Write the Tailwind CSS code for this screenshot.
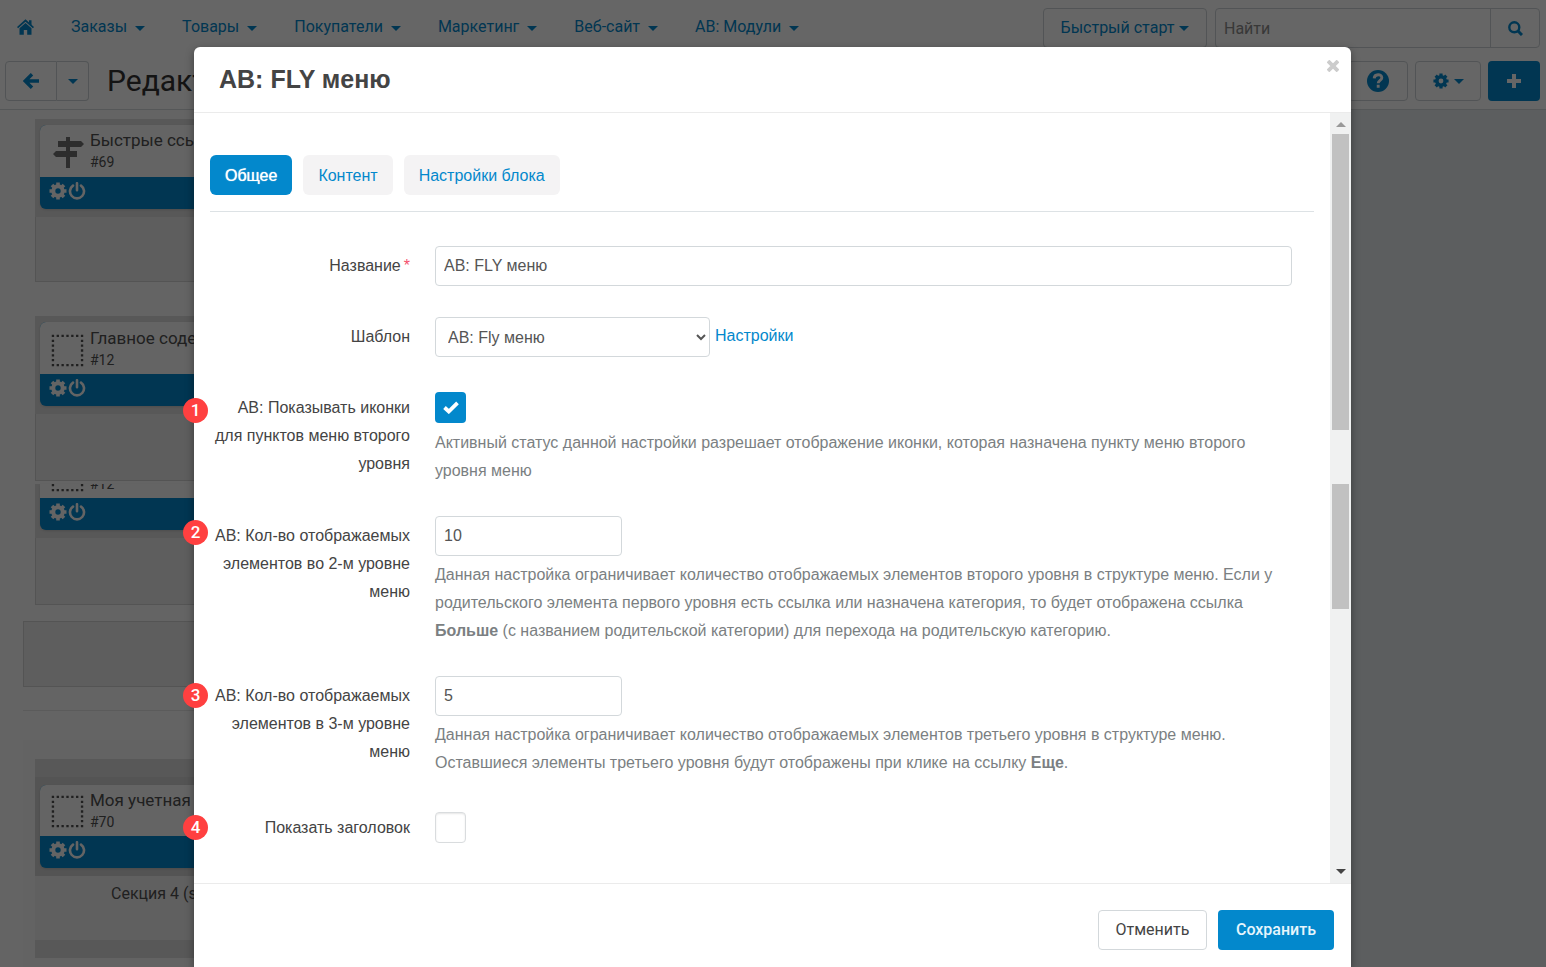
<!DOCTYPE html>
<html lang="ru">

<head>
    <meta charset="UTF-8">
    <meta name="viewport" content="width=device-width, initial-scale=1.0">
    <title>AB: FLY меню</title>
    <script src="https://cdn.jsdelivr.net/npm/@tailwindcss/browser@4"></script>
</head>

<body class="relative h-screen overflow-hidden bg-[#e6ebee] font-[Roboto,sans-serif] text-base text-[#333]">

    <!-- shared icons -->
    <svg class="hidden">
        <symbol id="gear" viewBox="0 0 18 18">
            <path d="M9 0.5v4M9 13.5v4M0.5 9h4M13.5 9h4M3 3l2.8 2.8M12.2 12.2L15 15M15 3l-2.8 2.8M5.8 12.2L3 15" fill="none" stroke="currentColor" stroke-width="3.6" />
            <circle cx="9" cy="9" r="4.7" fill="none" stroke="currentColor" stroke-width="4" />
        </symbol>
        <symbol id="power" viewBox="0 0 18 18">
            <path d="M5 3.6a7 7 0 1 0 8 0M9 1.2v7" fill="none" stroke="currentColor" stroke-width="2.6" stroke-linecap="round" />
        </symbol>
        <symbol id="caret" viewBox="0 0 10 5">
            <path d="M0 0h10L5 5z" fill="currentColor" />
        </symbol>
        <symbol id="block" viewBox="0 0 34 34">
            <rect x="2" y="2" width="30" height="30" fill="none" stroke="currentColor" stroke-width="2.4" stroke-dasharray="2.4 2.6" stroke-dashoffset="1.2" />
        </symbol>
    </svg>

    <!-- admin page -->
    <header class="flex h-14 items-start justify-between bg-white pr-[6px] text-[#0388cc]">
        <nav class="flex items-center gap-[37px] pt-[15px] pl-[17px] leading-6">
            <a href="#" aria-label="Главная">
                <svg class="h-4 w-[17px]" viewBox="0 0 17 16" fill="currentColor">
                    <path d="M8.500 0.300L17 8l-1.100 1.300L8.500 2.800 1.100 9.300 0 8z" />
                    <path d="M12 1.200h2.500v5L12 3.800zM8.500 4L14.500 9.200V15.700H10.200V11H6.800v4.700H2.500V9.200z" />
                </svg>
            </a>
            <a href="#" class="flex items-center gap-2">Заказы <svg class="mt-[3px] h-[5px] w-[10px]"><use href="#caret" /></svg></a>
            <a href="#" class="flex items-center gap-2">Товары <svg class="mt-[3px] h-[5px] w-[10px]"><use href="#caret" /></svg></a>
            <a href="#" class="flex items-center gap-2">Покупатели <svg class="mt-[3px] h-[5px] w-[10px]"><use href="#caret" /></svg></a>
            <a href="#" class="flex items-center gap-2">Маркетинг <svg class="mt-[3px] h-[5px] w-[10px]"><use href="#caret" /></svg></a>
            <a href="#" class="flex items-center gap-2">Веб-сайт <svg class="mt-[3px] h-[5px] w-[10px]"><use href="#caret" /></svg></a>
            <a href="#" class="flex items-center gap-2">АВ: Модули <svg class="mt-[3px] h-[5px] w-[10px]"><use href="#caret" /></svg></a>
        </nav>
        <div class="flex gap-2 pt-2">
            <button type="button" class="flex h-10 w-[164px] items-center justify-center gap-[5px] rounded border border-[#ccd2d6]">Быстрый старт <svg class="h-[5px] w-[10px]"><use href="#caret" /></svg></button>
            <form class="flex h-10 w-[325px] rounded border border-[#ccd2d6]">
                <input type="text" placeholder="Найти" aria-label="Найти" class="min-w-0 flex-1 px-2 pt-px placeholder:text-[#8c8c8c]">
                <button type="button" aria-label="Искать" class="flex w-[49px] items-center justify-center border-l border-[#ccd2d6]">
                    <svg class="size-[15px]" viewBox="0 0 15 15" fill="none" stroke="currentColor" stroke-width="2.400">
                        <circle cx="6.300" cy="6.300" r="5" />
                        <path d="M10 10l4 4" stroke-width="3" />
                    </svg>
                </button>
            </form>
        </div>
    </header>

    <div class="flex h-[54px] items-start justify-between border-b border-[#d5d9dc] bg-white pt-[5px] pr-[6px] pl-[5px] text-[#0388cc]">
        <div class="flex items-center">
            <button type="button" aria-label="Назад" class="flex h-10 w-[52px] items-center justify-center rounded-l border border-[#ccd2d6]">
                <svg class="size-4" viewBox="0 0 16 16" fill="none" stroke="currentColor" stroke-width="3.400">
                    <path d="M16 8H2.500M9 1.200L2.200 8l6.800 6.800" />
                </svg>
            </button>
            <button type="button" aria-label="История" class="flex h-10 w-8 items-center justify-center rounded-r border border-l-0 border-[#ccd2d6]"><svg class="h-[5px] w-[10px]"><use href="#caret" /></svg></button>
            <h1 class="ml-[18px] text-[30px] leading-10 text-[#333]">Редактирование макета</h1>
        </div>
        <div class="flex gap-[7px]">
            <button type="button" aria-label="Справка" class="flex h-10 w-[60px] items-center justify-center rounded border border-[#ccd2d6]">
                <svg class="size-[22px]" viewBox="0 0 23 23">
                    <circle cx="11.500" cy="11.500" r="11.500" fill="currentColor" />
                    <path d="M7.500 8.800c0.200-5 8-5 8-0.700c0 2.800-3.800 2.700-3.800 5.700M11.700 15.500v3" fill="none" stroke="#fff" stroke-width="3" />
                </svg>
            </button>
            <button type="button" aria-label="Действия" class="flex h-10 w-[66px] items-center justify-center gap-[5px] rounded border border-[#ccd2d6]"><svg class="size-4"><use href="#gear" /></svg><svg class="h-[5px] w-[10px]"><use href="#caret" /></svg></button>
            <button type="button" aria-label="Добавить" class="flex h-10 w-[52px] items-center justify-center rounded bg-[#0388cc] text-white">
                <svg class="size-[14px]" viewBox="0 0 14 14" stroke="currentColor" stroke-width="4"><path d="M7 0v14M0 7h14" /></svg>
            </button>
        </div>
    </div>

    <main class="flex h-[857px] w-1/2 flex-col bg-[#fafafa] pt-[9px] pl-[23px] text-[#505050]">
        <section class="ml-3 border-b border-[#d2d2d2] bg-[#ebebeb]">
            <div class="h-[98px] bg-[#dcdcdc] pt-[6px] pl-[5px]">
                <div class="rounded-l-md bg-[#0388cc] shadow">
                    <div class="flex h-[52px] gap-[6px] rounded-tl-md bg-[#fafafa] pl-[13px]">
                        <svg class="mt-3 h-8 w-[31px] text-[#707070]" viewBox="0 0 31 32" fill="currentColor">
                            <path d="M13 0h4v31h-4z" />
                            <path d="M5 4h23l3 3-3 3H5zM3 14h21v6H3l-3-3z" />
                        </svg>
                        <div class="pt-[3px] text-[17px] leading-6">Быстрые ссылки<div class="text-sm leading-5">#69</div></div>
                    </div>
                    <div class="flex h-8 items-start gap-px pt-[5px] pl-[9px] text-[#fafafa]"><svg class="size-[18px]"><use href="#gear" /></svg><svg class="size-[18px]"><use href="#power" /></svg></div>
                </div>
            </div>
            <div class="h-16 border-l border-[#d2d2d2]"></div>
        </section>

        <section class="mt-[34px] ml-3 border-b border-[#d2d2d2] bg-[#ebebeb]">
            <div class="h-[98px] bg-[#dcdcdc] pt-[6px] pl-[5px]">
                <div class="rounded-l-md bg-[#0388cc] shadow">
                    <div class="flex h-[52px] gap-[6px] rounded-tl-md bg-[#fafafa] pl-[11px]">
                        <svg class="mt-3 size-[33px]"><use href="#block" /></svg>
                        <div class="pt-1 text-[17px] leading-6">Главное содержимое<div class="text-sm leading-5">#12</div></div>
                    </div>
                    <div class="flex h-8 items-start gap-px pt-[5px] pl-[9px] text-[#fafafa]"><svg class="size-[18px]"><use href="#gear" /></svg><svg class="size-[18px]"><use href="#power" /></svg></div>
                </div>
            </div>
            <div class="h-[66px] border-l border-[#d2d2d2]"></div>
        </section>

        <!-- lower end of a block that is scrolled under the previous one -->
        <section class="mt-[3px] ml-3 border-b border-[#d2d2d2] bg-[#ebebeb]">
            <div class="h-[54px] bg-[#dcdcdc] pl-[5px]">
                <div class="rounded-bl-md bg-[#0388cc] shadow">
                    <div class="flex h-[14px] items-end gap-[6px] overflow-hidden bg-[#fafafa] pl-[11px]">
                        <svg class="mb-[6px] size-[33px] shrink-0"><use href="#block" /></svg>
                        <div class="mb-1 text-sm leading-5">#12</div>
                    </div>
                    <div class="flex h-8 items-start gap-px pt-[5px] pl-[9px] text-[#fafafa]"><svg class="size-[18px]"><use href="#gear" /></svg><svg class="size-[18px]"><use href="#power" /></svg></div>
                </div>
            </div>
            <div class="h-[66px] border-l border-[#d2d2d2]"></div>
        </section>

        <section class="mt-4 h-[66px] border border-[#d2d2d2] bg-[#ebebeb]"></section>
        <hr class="mt-[23px] border-[#e3e3e3]">

        <section class="mt-[29px] bg-[#f7f7f7] pt-[19px] pl-3">
            <div class="h-[18px] bg-[#dcdcdc]"></div>
            <div class="h-[99px] bg-[#d2d2d2] pt-2 pl-[5px]">
                <div class="rounded-l-md bg-[#0388cc] shadow">
                    <div class="flex h-[51px] gap-[6px] rounded-tl-md bg-[#fafafa] pl-[11px]">
                        <svg class="mt-[10px] size-[33px]"><use href="#block" /></svg>
                        <div class="pt-[3px] text-[17px] leading-6">Моя учетная запись<div class="text-sm leading-5">#70</div></div>
                    </div>
                    <div class="flex h-8 items-start gap-px pt-[5px] pl-[9px] text-[#fafafa]"><svg class="size-[18px]"><use href="#gear" /></svg><svg class="size-[18px]"><use href="#power" /></svg></div>
                </div>
            </div>
            <div class="h-16 bg-[#f0f0f0] pt-[6px] pl-[76px] leading-6">Секция 4 (span 4)</div>
            <div class="h-[18px] bg-[#dcdcdc]"></div>
            <div class="h-[9px]"></div>
        </section>
    </main>

    <!-- dialog -->
    <div class="absolute inset-0 bg-black/60 pt-[47px] pr-[195px] pl-[194px]">
        <div role="dialog" aria-labelledby="dialog-title" class="flex h-full flex-col rounded-t-md bg-white font-['Liberation_Sans',Arial,sans-serif] text-[#444] shadow-[0_3px_8px_rgba(0,0,0,0.4)]">
            <div class="flex h-[66px] shrink-0 items-start justify-between border-b border-[#ebebeb] pr-3 pl-[25px]">
                <h2 id="dialog-title" class="pt-4 text-[25px] leading-8 font-bold">AB: FLY меню</h2>
                <button type="button" aria-label="Закрыть" class="mt-[13px] text-[#ccc]">
                    <svg class="size-3" viewBox="0 0 12 12" stroke="currentColor" stroke-width="3.800"><path d="M1 1l10 10M11 1L1 11" /></svg>
                </button>
            </div>

            <div class="flex min-h-0 flex-1">
                <div class="min-w-0 flex-1 pt-[42px] pr-4 pl-4">
                    <div class="flex gap-[11px] border-b border-[#dde2e5] pb-4">
                        <button type="button" class="h-10 rounded-md bg-[#0388cc] px-[15px] pt-px text-white [text-shadow:0_0_1px_#fff]">Общее</button>
                        <button type="button" class="h-10 rounded-md bg-[#f4f3f4] px-[15px] pt-px text-[#0388cc]">Контент</button>
                        <button type="button" class="h-10 rounded-md bg-[#f4f3f4] px-[15px] pt-px text-[#0388cc]">Настройки блока</button>
                    </div>

                    <form class="mt-[34px] grid gap-[31px] pr-[22px] leading-7">
                        <div class="flex gap-[25px]">
                            <label for="name" class="w-[200px] shrink-0 pt-[6px] text-right">Название<span class="ml-[3px] text-[#f4516c]">*</span></label>
                            <input id="name" type="text" value="AB: FLY меню" class="h-10 min-w-0 flex-1 rounded border border-[#d3d8db] px-2 text-[#555]">
                        </div>

                        <div class="flex gap-[25px]">
                            <label for="template" class="w-[200px] shrink-0 pt-[6px] text-right">Шаблон</label>
                            <div class="flex gap-[5px]">
                                <select id="template" class="h-10 w-[275px] rounded border border-[#d3d8db] bg-white px-2 text-[#555]">
                                    <option>AB: Fly меню</option>
                                </select>
                                <a href="#" class="pt-[5px] text-[#0388cc]">Настройки</a>
                            </div>
                        </div>

                        <div class="relative flex gap-[25px]">
                            <span class="absolute top-[10px] -left-[27px] size-[25px] rounded-full bg-[#ff4040] text-center font-[Roboto,sans-serif] text-[17px] leading-[25px] font-medium text-white">1</span>
                            <label for="icons" class="w-[200px] shrink-0 pt-[6px] text-right">AB: Показывать иконки для пунктов меню второго уровня</label>
                            <div class="flex-1 pt-1">
                                <div class="relative size-[31px]">
                                    <input id="icons" type="checkbox" checked class="block size-[31px] appearance-none rounded bg-[#0388cc]">
                                    <svg class="pointer-events-none absolute top-[9px] left-2 h-[13px] w-4" viewBox="0 0 16 13" fill="none" stroke="#fff" stroke-width="3.800"><path d="M1.500 6.500l4.300 4L14.500 1.800" /></svg>
                                </div>
                                <p class="mt-[6px] text-[#7b7f82]">Активный статус данной настройки разрешает отображение иконки, которая назначена пункту меню второго уровня меню</p>
                            </div>
                        </div>

                        <div class="relative flex gap-[25px]">
                            <span class="absolute top-1 -left-[27px] size-[25px] rounded-full bg-[#ff4040] text-center font-[Roboto,sans-serif] text-[17px] leading-[25px] font-medium text-white">2</span>
                            <label for="level2" class="w-[200px] shrink-0 pt-[6px] text-right">AB: Кол-во отображаемых элементов во 2-м уровне меню</label>
                            <div class="flex-1">
                                <input id="level2" type="text" value="10" class="block h-10 w-[187px] rounded border border-[#d3d8db] px-2 text-[#555]">
                                <p class="mt-[5px] text-[#7b7f82]">Данная настройка ограничивает количество отображаемых элементов второго уровня в структуре меню. Если у родительского элемента первого уровня есть ссылка или назначена категория, то будет отображена ссылка <b>Больше</b> (с названием родительской категории) для перехода на родительскую категорию.</p>
                            </div>
                        </div>

                        <div class="relative flex gap-[25px]">
                            <span class="absolute top-[7px] -left-[27px] size-[25px] rounded-full bg-[#ff4040] text-center font-[Roboto,sans-serif] text-[17px] leading-[25px] font-medium text-white">3</span>
                            <label for="level3" class="w-[200px] shrink-0 pt-[6px] text-right">AB: Кол-во отображаемых элементов в 3-м уровне меню</label>
                            <div class="flex-1">
                                <input id="level3" type="text" value="5" class="block h-10 w-[187px] rounded border border-[#d3d8db] px-2 text-[#555]">
                                <p class="mt-[5px] text-[#7b7f82]">Данная настройка ограничивает количество отображаемых элементов третьего уровня в структуре меню. Оставшиеся элементы третьего уровня будут отображены при клике на ссылку <b>Еще</b>.</p>
                            </div>
                        </div>

                        <div class="relative flex gap-[25px]">
                            <span class="absolute top-[7px] -left-[27px] size-[25px] rounded-full bg-[#ff4040] text-center font-[Roboto,sans-serif] text-[17px] leading-[25px] font-medium text-white">4</span>
                            <label for="show-title" class="w-[200px] shrink-0 pt-[6px] text-right">Показать заголовок</label>
                            <div class="pt-1">
                                <input id="show-title" type="checkbox" class="block size-[31px] appearance-none rounded border border-[#d9dcde] bg-white shadow-[inset_0_1px_2px_rgba(0,0,0,0.1)]">
                            </div>
                        </div>
                    </form>
                </div>

                <!-- scrollbar -->
                <div class="flex w-[21px] flex-col bg-[#f0f1f1] px-[2px]">
                    <div class="flex h-[21px] shrink-0 items-center justify-center pt-[2px] text-[#999]"><svg class="h-[5px] w-[10px]" viewBox="0 0 10 5"><path d="M0 5h10L5 0z" fill="currentColor" /></svg></div>
                    <div class="h-[296px] bg-[#c1c1c1]"></div>
                    <div class="mt-[54px] h-[125px] bg-[#c1c1c1]"></div>
                    <div class="mt-auto flex h-[21px] shrink-0 items-center justify-center pb-[2px] text-[#444]"><svg class="h-[5px] w-[10px]"><use href="#caret" /></svg></div>
                </div>
            </div>

            <div class="flex h-[84px] shrink-0 items-start justify-end gap-[11px] border-t border-[#ebebeb] pt-[26px] pr-[17px] font-[Roboto,sans-serif]">
                <button type="button" class="h-10 w-[109px] rounded border border-[#d3d8db]">Отменить</button>
                <button type="button" class="h-10 w-[116px] rounded bg-[#0388cc] font-medium text-[#e6f5fc]">Сохранить</button>
            </div>
        </div>
    </div>
</body>

</html>
